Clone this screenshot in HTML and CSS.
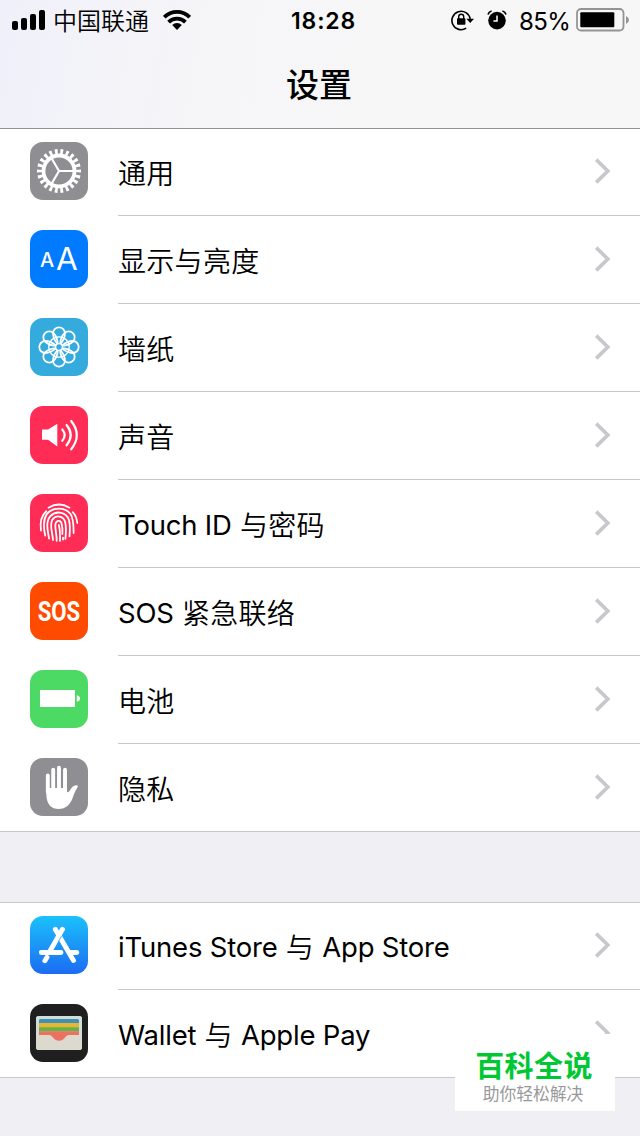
FILE: index.html
```html
<!DOCTYPE html>
<html lang="zh-CN">
<head>
    <meta charset="UTF-8">
    <meta name="viewport" content="width=device-width, initial-scale=1.0">
    <title>设置</title>
    <link rel="stylesheet" href="styles.css">
</head>
<body>
    <svg class="defs" width="0" height="0">
        <symbol id="chevron" viewBox="0 0 18 28">
            <path d="M2.2 2.6 L13.8 14 L2.2 25.4" fill="none" stroke="#c7c7cc" stroke-width="3.6"/>
        </symbol>
        <linearGradient id="storeBlue" x1="0" y1="0" x2="0" y2="1">
            <stop offset="0" stop-color="#1bc1fb"/>
            <stop offset="1" stop-color="#1c6cf2"/>
        </linearGradient>
    </svg>

    <header class="header">
        <div class="status">
            <div class="status-left">
                <svg width="34" height="20" viewBox="0 0 34 20">
                    <rect x="0" y="11" width="6" height="9" rx="2"/>
                    <rect x="9" y="8" width="6" height="12" rx="2"/>
                    <rect x="18" y="4" width="6" height="16" rx="2"/>
                    <rect x="27" y="0" width="6" height="20" rx="2"/>
                </svg>
                <span class="carrier">中国联通</span>
                <svg width="28" height="20" viewBox="0 0 28 20">
                    <g fill="none" stroke="#000" stroke-width="3.8">
                        <path d="M1.3 7.2 A18 18 0 0 1 26.7 7.2"/>
                        <path d="M5.6 12.1 A11.8 11.8 0 0 1 22.4 12.1"/>
                    </g>
                    <path d="M9.2 15.1 A6.8 6.8 0 0 1 18.8 15.1 L14 20 Z"/>
                </svg>
            </div>
            <div class="time">18:28</div>
            <div class="status-right">
                <svg class="lock" width="23" height="22" viewBox="0 0 23 22">
                    <path d="M15.2 19.2 A9.2 9.2 0 1 1 19.2 10" fill="none" stroke="#000" stroke-width="1.6"/>
                    <path d="M15.4 9.8 H23 L19.2 14 Z"/>
                    <rect x="6" y="9.3" width="8.4" height="6.4" rx=".8"/>
                    <path d="M7.7 10 V7.8 A2.5 2.5 0 0 1 12.7 7.8 V10" fill="none" stroke="#000" stroke-width="1.4"/>
                </svg>
                <svg class="alarm" width="20" height="20" viewBox="0 0 20 20">
                    <circle cx="10" cy="10.6" r="8.8"/>
                    <path d="M10 5.6 V11 H6.4" fill="none" stroke="#fff" stroke-width="1.5"/>
                    <path d="M1 4.4 Q1.8 1.7 4.6 1 M19 4.4 Q18.2 1.7 15.4 1" fill="none" stroke="#000" stroke-width="1.7"/>
                </svg>
                <span class="percent">85%</span>
                <svg width="54" height="24" viewBox="0 0 54 24">
                    <rect x="1" y="1" width="46.5" height="21.5" rx="4" fill="none" stroke="#949496" stroke-width="1.8"/>
                    <rect x="4.3" y="4.3" width="34" height="15" rx="1"/>
                    <path d="M50 8 Q53 9.3 53 12 Q53 14.7 50 16 Z" fill="#949496"/>
                </svg>
            </div>
        </div>
        <h1 class="title">设置</h1>
    </header>

    <ul class="list">
        <li class="row">
            <svg class="icon gray" viewBox="0 0 58 58">
                <g fill="none" stroke="#fff">
                    <circle cx="29" cy="29" r="19.2" stroke-width="5.6" pathLength="44" stroke-dasharray="1 1" stroke-dashoffset=".5"/>
                    <circle cx="29" cy="29" r="15.5" stroke-width="3.8"/>
                    <path d="M29 29 H45 M29 29 L21 15.2 M29 29 L21 42.8" stroke-width="2.2"/>
                </g>
            </svg>
            <div class="cell"><span>通用</span><svg class="chevron"><use href="#chevron"/></svg></div>
        </li>
        <li class="row">
            <svg class="icon blue" viewBox="0 0 58 58">
                <text class="letter-s" x="10" y="37">A</text>
                <text class="letter-l" x="26" y="39.5">A</text>
            </svg>
            <div class="cell"><span>显示与亮度</span><svg class="chevron"><use href="#chevron"/></svg></div>
        </li>
        <li class="row">
            <svg class="icon sky" viewBox="0 0 58 58">
                <defs>
                    <path id="petal" d="M27.6 26 C24.6 22.5 23 18.5 23 15.3 A6 6 0 0 1 35 15.3 C35 18.5 33.4 22.5 30.4 26"/>
                </defs>
                <g fill="none" stroke="#fff" stroke-width="1.8">
                    <use href="#petal"/>
                    <use href="#petal" transform="rotate(45 29 29)"/>
                    <use href="#petal" transform="rotate(90 29 29)"/>
                    <use href="#petal" transform="rotate(135 29 29)"/>
                    <use href="#petal" transform="rotate(180 29 29)"/>
                    <use href="#petal" transform="rotate(225 29 29)"/>
                    <use href="#petal" transform="rotate(270 29 29)"/>
                    <use href="#petal" transform="rotate(315 29 29)"/>
                    <circle cx="29" cy="29" r="10.2" stroke-width="1.3"/>
                    <circle cx="29" cy="29" r="3.4" stroke-width="1.4"/>
                </g>
            </svg>
            <div class="cell"><span>墙纸</span><svg class="chevron"><use href="#chevron"/></svg></div>
        </li>
        <li class="row">
            <svg class="icon pink" viewBox="0 0 58 58">
                <path d="M12 23.5 H18 L27.3 17.7 V40.5 L18 33.8 H12 Z" fill="#fff"/>
                <g fill="none" stroke="#fff" stroke-width="2.2" stroke-linecap="round">
                    <path d="M32.3 23.5 Q37 29 32.3 34.8"/>
                    <path d="M36.6 19 Q44.8 29 36.6 39.3"/>
                    <path d="M41.2 15 Q52.4 29 41.2 43.3"/>
                </g>
            </svg>
            <div class="cell"><span>声音</span><svg class="chevron"><use href="#chevron"/></svg></div>
        </li>
        <li class="row">
            <svg class="icon pink" viewBox="0 0 58 58">
                <g fill="none" stroke="#fff" stroke-width="1.8" stroke-linecap="round">
                    <path d="M18.5 13.7 Q29 7.3 39.5 13.7"/>
                    <path d="M11 36.5 C9.8 28 11.5 21.5 16.3 17.3"/>
                    <path d="M42.7 18.2 Q46.5 21.8 47.3 29"/>
                    <path d="M15.2 41.5 C12.5 29 14 18 24.3 15.2 Q34.5 12.8 40.5 20 Q43.8 25 43.6 39"/>
                    <path d="M19.1 44.5 C17.5 36 15.5 27 20.5 22 C27 15.8 36.5 18.5 39 26 Q40.5 32 39.5 42.3"/>
                    <path d="M23 46 C22.3 37 19.3 31 22.3 25.8 C26 20 34 22 35.3 28.5 Q36.5 35 35.4 44.8"/>
                    <path d="M26.7 46.8 C26.7 39 24.5 33 25.6 29.4 C27 25.8 31 26 31.7 30 Q32.8 35 32.4 40"/>
                    <path d="M28.8 31 Q30.3 36 30 46.8 M33 43.6 V45.5"/>
                </g>
            </svg>
            <div class="cell"><span><span class="latin">Touch ID</span> 与密码</span><svg class="chevron"><use href="#chevron"/></svg></div>
        </li>
        <li class="row">
            <div class="icon orange"><span class="sos">SOS</span></div>
            <div class="cell"><span><span class="latin">SOS</span> 紧急联络</span><svg class="chevron"><use href="#chevron"/></svg></div>
        </li>
        <li class="row">
            <svg class="icon green" viewBox="0 0 58 58">
                <rect x="10" y="20" width="35" height="17" fill="#fff"/>
                <path d="M46.8 25.3 Q50 26 50 28.5 Q50 31 46.8 31.7 Z" fill="#fff"/>
            </svg>
            <div class="cell"><span>电池</span><svg class="chevron"><use href="#chevron"/></svg></div>
        </li>
        <li class="row">
            <svg class="icon gray" viewBox="0 0 58 58">
                <g stroke="#fff" stroke-width="3.9" stroke-linecap="round">
                    <path d="M17.8 17.5 V34 M23.2 11.7 V34 M29 9.8 V34 M35 11.7 V34"/>
                </g>
                <path d="M16 30 H36.9 V34 Q38.6 34.6 39.8 32.4 Q42.5 27.2 47 27.2 Q48.6 27.6 47.5 29.2 Q45 33 43.5 37.5 Q39.5 51 28.5 51 Q18 51 16.5 39 Z" fill="#fff"/>
            </svg>
            <div class="cell"><span>隐私</span><svg class="chevron"><use href="#chevron"/></svg></div>
        </li>
    </ul>

    <ul class="list second">
        <li class="row">
            <svg class="icon" viewBox="0 0 58 58">
                <rect width="58" height="58" fill="url(#storeBlue)"/>
                <g stroke="#fff" stroke-width="4.9" stroke-linecap="round">
                    <path d="M11.3 36.5 H31 M41 36.5 H46.8"/>
                    <path d="M25.3 13.3 L43.5 44.5"/>
                    <path d="M32.5 13.3 L19.7 35.5 M17 41.3 L14.9 44.7"/>
                </g>
                <path d="M31.6 20 L28.6 25.2" stroke="#1b9af7" stroke-width="0.8"/>
            </svg>
            <div class="cell"><span><span class="latin">iTunes Store</span> 与 <span class="latin">App Store</span></span><svg class="chevron"><use href="#chevron"/></svg></div>
        </li>
        <li class="row">
            <svg class="icon black" viewBox="0 0 58 58">
                <rect x="6" y="12" width="46" height="34" rx="2.8" fill="#dcd9ce"/>
                <path d="M6 31 V14.8 Q6 12 8.8 12 H49.2 Q52 12 52 14.8 V31 Z" fill="#cfdedb"/>
                <path d="M9 19.5 V16.5 Q9 15 10.5 15 H47.5 Q49 15 49 16.5 V19.5 Z" fill="#4190b5"/>
                <rect x="9" y="19" width="40" height="4.3" fill="#e9b72e"/>
                <rect x="9" y="23.2" width="40" height="4.3" fill="#6cb043"/>
                <rect x="9" y="27.3" width="40" height="10" fill="#ed7161"/>
                <path d="M6 31 H19 Q21.3 31 22.5 33 Q25 36.7 29 36.7 Q33 36.7 35.5 33 Q36.7 31 39 31 H52 V43.2 Q52 46 49.2 46 H8.8 Q6 46 6 43.2 Z" fill="#dcd9ce"/>
            </svg>
            <div class="cell"><span><span class="latin">Wallet</span> 与 <span class="latin">Apple Pay</span></span><svg class="chevron"><use href="#chevron"/></svg></div>
        </li>
    </ul>

    <div class="badge">
        <div class="badge-title">百科全说</div>
        <div class="badge-sub">助你轻松解决</div>
    </div>
</body>
</html>
```
FILE: styles.css
```css
* {
    box-sizing: border-box;
}
body {
    position: relative;
    margin: 0;
    height: 1136px;
    overflow: hidden;
    background-color: #efeff4;
    color: #000;
    font-family: Inter, "Noto Sans CJK SC", sans-serif;
}
svg {
    display: block;
    flex-shrink: 0;
}
.defs {
    position: absolute;
}
.header {
    height: 129px;
    background: linear-gradient(100deg, #f0f0fa 0, #f6f6f8 35%, #f7f7f7 100%);
    border-bottom: 1px solid #929294;
}
.status {
    display: grid;
    grid-template-columns: 1fr auto 1fr;
    align-items: center;
    height: 40px;
    padding: 0 10px 0 12px;
}
.status-left, .status-right {
    display: flex;
    align-items: center;
}
.status-right {
    justify-content: flex-end;
}
.carrier {
    margin: 0 14px 0 7px;
    padding-top: 3px;
    font-size: 24px;
    line-height: 37px;
    font-weight: 350;
}
.time {
    padding: 1px 0 0 5px;
    font-size: 23px;
    font-weight: 600;
    letter-spacing: 0.8px;
}
.lock {
    margin-right: 13px;
}
.alarm {
    margin-right: 12px;
}
.percent {
    margin-right: 6px;
    padding-top: 2px;
    font-size: 24px;
    letter-spacing: -0.7px;
}
.title {
    margin: 0;
    padding-top: 20px;
    font-size: 33px;
    font-weight: 500;
    line-height: 50px;
    text-align: center;
    text-indent: -2px;
}
.list {
    margin: 0;
    padding: 0;
    list-style: none;
    background-color: #fff;
    border-bottom: 1px solid #c8c7cc;
}
.second {
    margin-top: 70px;
    border-top: 1px solid #c8c7cc;
}
.row {
    display: flex;
    height: 88px;
    padding-left: 30px;
}
.row:first-child, .row:last-child {
    height: 87px;
}
.icon {
    flex-shrink: 0;
    width: 58px;
    height: 58px;
    margin: 14px 30px 0 0;
    border-radius: 13px;
}
.row:first-child .icon {
    margin-top: 13px;
}
.cell {
    display: flex;
    flex: 1;
    align-items: center;
    justify-content: space-between;
    padding: 0 28px 2px 0;
    border-bottom: 1px solid #c8c7cc;
    font-size: 28px;
    line-height: 40px;
}
.cell > span {
    padding-top: 6px;
    font-weight: 350;
    letter-spacing: 0.3px;
}
.cell .latin {
    position: relative;
    top: -1px;
    font-size: 27.5px;
    font-weight: 400;
    letter-spacing: -0.2px;
}
.row:last-child .cell {
    border-bottom: none;
}
.chevron {
    width: 18px;
    height: 28px;
}
.gray {
    background-color: #8e8e93;
}
.blue {
    background-color: #007aff;
}
.sky {
    background-color: #35aadc;
}
.pink {
    background-color: #ff2d55;
}
.orange {
    display: flex;
    align-items: center;
    justify-content: center;
    background-color: #ff4b00;
}
.green {
    background-color: #4cd964;
}
.black {
    background-color: #1f1f1f;
}
.letter-s, .letter-l {
    fill: #fff;
    font-size: 20px;
    font-weight: 500;
}
.letter-l {
    font-size: 31.5px;
    font-weight: 400;
}
.sos {
    padding-top: 1px;
    color: #fff;
    font-family: Roboto, sans-serif;
    font-size: 28px;
    font-weight: 700;
    line-height: 40px;
    transform: scaleX(0.79);
}
.badge {
    position: absolute;
    left: 455px;
    top: 1034px;
    width: 160px;
    height: 77px;
    padding-top: 14px;
    background-color: #fff;
    text-align: center;
}
.badge-title {
    color: #00c832;
    font-size: 29px;
    font-weight: 700;
    line-height: 38px;
    letter-spacing: 0.4px;
    text-indent: -2px;
}
.badge-sub {
    margin-top: -1px;
    color: #999;
    font-size: 16.8px;
    line-height: 18px;
    text-indent: -4px;
}
```
